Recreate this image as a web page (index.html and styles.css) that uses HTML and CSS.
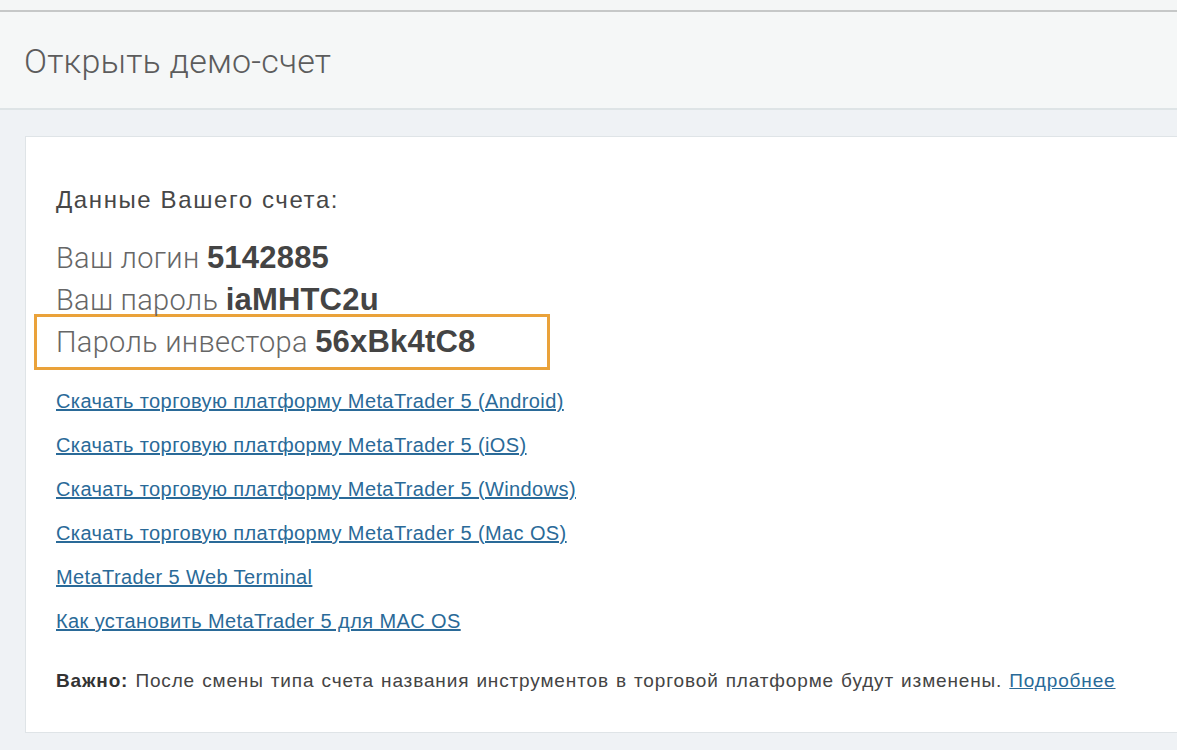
FILE: index.html
```html
<!DOCTYPE html>
<html lang="ru">
<head>
    <meta charset="UTF-8">
    <meta name="viewport" content="width=device-width, initial-scale=1.0">
    <title>Открыть демо-счет</title>
    <link rel="stylesheet" href="styles.css">
</head>
<body>
    <div class="topbar"></div>

    <!-- Заголовок страницы -->
    <div class="page-header">
        <h1>Открыть демо-счет</h1>
    </div>

    <div class="content">
        <div class="card">
            <p class="account-title">Данные Вашего счета:</p>

            <div class="credentials">
                <div class="cred-row">Ваш логин <b>5142885</b></div>
                <div class="cred-row">Ваш пароль <b>iaMHTC2u</b></div>
                <div class="cred-row highlight">Пароль инвестора <b>56xBk4tC8</b></div>
            </div>

            <ul class="links">
                <li><a href="#">Скачать торговую платформу MetaTrader 5 (Android)</a></li>
                <li><a href="#">Скачать торговую платформу MetaTrader 5 (iOS)</a></li>
                <li><a href="#">Скачать торговую платформу MetaTrader 5 (Windows)</a></li>
                <li><a href="#">Скачать торговую платформу MetaTrader 5 (Mac OS)</a></li>
                <li><a href="#">MetaTrader 5 Web Terminal</a></li>
                <li><a href="#">Как установить MetaTrader 5 для MAC OS</a></li>
            </ul>

            <p class="notice"><b>Важно:</b> После смены типа счета названия инструментов в торговой платформе будут изменены. <a href="#">Подробнее</a></p>
        </div>
    </div>
</body>
</html>
```

FILE: styles.css
```css
body {
    margin: 0;
    padding: 0;
    background: #eff2f5;
    font-family: 'Liberation Sans', Arial, sans-serif;
    color: #444;
    overflow: hidden;
}

/* Верхняя полоса */
.topbar {
    height: 10px;
    background: #f4f6f6;
    border-bottom: 2px solid #c6c8c8;
}

/* Заголовок */
.page-header {
    height: 96px;
    background: #f5f7f7;
    border-bottom: 2px solid #dee4e6;
    padding-left: 24px;
    display: flex;
    align-items: center;
}

.page-header h1 {
    margin: 2px 0 0 0;
    font-family: 'Roboto', 'Liberation Sans', sans-serif;
    font-weight: 300;
    font-size: 34px;
    color: #5c5c5c;
    letter-spacing: 0.2px;
}

/* Контент */
.content {
    padding: 26px 0 18px 25px;
}

.card {
    background: #fff;
    border: 1px solid #dfe4e7;
    border-right: none;
    padding: 48px 30px 39px 30px;
}

.account-title {
    margin: 0 0 22px 0;
    font-size: 24px;
    line-height: 30px;
    letter-spacing: 1.6px;
    color: #474747;
}

/* Данные счета */
.cred-row {
    font-family: 'Roboto', 'Liberation Sans', sans-serif;
    font-weight: 300;
    font-size: 29px;
    line-height: 42px;
    letter-spacing: 0.3px;
    color: #666;
}

.cred-row b {
    font-family: 'Liberation Sans', Arial, sans-serif;
    font-weight: bold;
    font-size: 31px;
    letter-spacing: 0.2px;
    color: #444;
}

.highlight {
    box-sizing: border-box;
    width: 516px;
    margin: -7px 0 -7px -22px;
    padding: 4px 0 4px 19px;
    border: 3px solid #eaa23a;
}

/* Ссылки */
.links {
    list-style: none;
    margin: 26px 0 0 0;
    padding: 0;
}

.links li {
    font-size: 20px;
    line-height: 24px;
    letter-spacing: 0.4px;
    margin-bottom: 20px;
}

.links li:last-child {
    margin-bottom: 0;
}

a {
    color: #2a6a98;
    text-decoration: underline;
}

.notice {
    margin: 36px 0 0 0;
    font-size: 19px;
    line-height: 24px;
    letter-spacing: 0.85px;
    word-spacing: 1px;
    color: #444;
}

.notice b {
    color: #333;
}
```
